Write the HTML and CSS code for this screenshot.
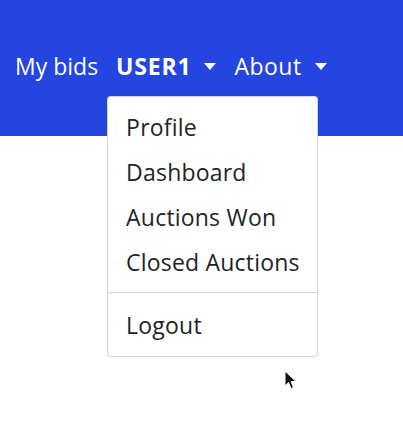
FILE: index.html
```html
<!DOCTYPE html>
<html>
<head>
<meta charset="utf-8">
<link rel="stylesheet" href="styles.css">
</head>
<body>
<nav class="navbar">
  <ul class="nav">
    <li class="nav-item"><a class="nav-link">My bids</a></li>
    <li class="nav-item dropdown">
      <a class="nav-link user">USER1<span class="caret"></span></a>
      <div class="menu">
        <a class="menu-item">Profile</a>
        <a class="menu-item">Dashboard</a>
        <a class="menu-item">Auctions Won</a>
        <a class="menu-item">Closed Auctions</a>
        <div class="divider"></div>
        <a class="menu-item">Logout</a>
      </div>
    </li>
    <li class="nav-item"><a class="nav-link about">About<span class="caret"></span></a></li>
  </ul>
</nav>
<main class="content"></main>
<svg class="cursor" width="14" height="22" viewBox="0 0 14 22">
  <path d="M1 1 L1 16 L4.5 12.5 L7 18.5 L9.5 17.5 L7 11.5 L12 11.5 Z" fill="#111" stroke="#fff" stroke-width="1"/>
</svg>
</body>
</html>
```
FILE: styles.css
```css
html, body {
  margin: 0;
  padding: 0;
  background: #fff;
  font-family: "Open Sans", "Noto Sans", sans-serif;
}
body {
  min-height: 446px;
  position: relative;
}
.navbar {
  position: relative;
  z-index: 2;
  background: #2545e0;
  height: 136px;
  box-sizing: border-box;
  padding: 46px 0 0 15px;
}
.content {
  height: 310px;
}
.nav {
  list-style: none;
  margin: 0;
  padding: 0;
  display: flex;
  align-items: center;
}
.nav-item {
  position: relative;
}
.nav-link {
  display: flex;
  align-items: center;
  color: #fff;
  font-size: 23px;
  line-height: 40px;
  margin-right: 18px;
}
.user {
  font-weight: 700;
  letter-spacing: 0.8px;
}
.about {
  letter-spacing: 0.5px;
}
.caret {
  display: inline-block;
  width: 0;
  height: 0;
  border-left: 6.5px solid transparent;
  border-right: 6.5px solid transparent;
  border-top: 7px solid #fff;
  margin-left: 13px;
}
.menu {
  position: absolute;
  top: 50px;
  left: -9px;
  width: 211px;
  box-sizing: border-box;
  background: #fff;
  border: 1px solid rgba(0,0,0,.17);
  border-radius: 4px;
  padding: 8px 0;
  display: flex;
  flex-direction: column;
  z-index: 10;
}
.menu-item {
  display: block;
  color: #212529;
  font-size: 23px;
  line-height: 35px;
  padding: 5px 18px;
  letter-spacing: 0.2px;
  white-space: nowrap;
}
.divider {
  height: 0;
  border-top: 1px solid #d6d6d6;
  margin: 7px 0 10px;
}
.cursor {
  position: absolute;
  left: 284px;
  top: 370px;
  z-index: 20;
}
```
